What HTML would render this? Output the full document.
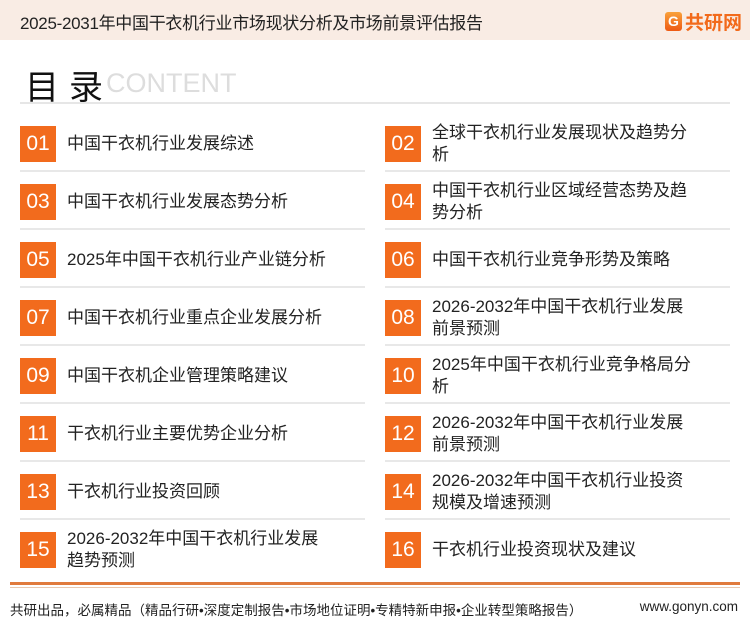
<!DOCTYPE html>
<html><head><meta charset="utf-8"><style>
body{margin:0;width:750px;height:622px;background:#fff;font-family:"Liberation Sans","Noto Sans CJK SC",sans-serif;position:relative;overflow:hidden;color:#222}
.hd{position:absolute;left:0;top:0;width:750px;height:40px;background:#f9ece4}
.hd .t{position:absolute;left:20px;top:9px;font-size:17px;color:#222;letter-spacing:-0.3px}
.logo{position:absolute;right:8px;top:8px;font-size:19px;font-weight:bold;color:#f26a1b;display:flex;align-items:center;gap:3px}
.logo i{display:inline-block;width:17px;height:19px;background:linear-gradient(#f9a13a,#ee5a14);border-radius:3px;color:#fff;font-style:normal;font-size:14px;text-align:center;line-height:19px}
.mt{position:absolute;left:25px;top:60px;font-size:34px;color:#111;letter-spacing:10px}
.ct{position:absolute;left:106px;top:68px;font-size:27px;color:#ddd}
.hl{position:absolute;left:20px;top:102px;width:710px;height:2px;background:#e6e6e6}
.it{position:absolute;width:345px;height:58px}
.it .n{position:absolute;left:0;top:8px;width:36px;height:36px;background:#f26b1d;color:#fff;font-size:21px;text-align:center;line-height:36px;font-weight:300}
.it .x{position:absolute;left:47px;top:0;height:52px;width:266px;display:flex;align-items:center;font-size:17px;line-height:22px;color:#222}
.it .l{position:absolute;left:0;top:52px;width:345px;height:2px;background:#e8e8e8}
.fl{position:absolute;left:10px;top:582px;width:730px;height:3px;background:#e07a3c}
.fl2{position:absolute;left:10px;top:587px;width:730px;height:1px;background:#e8c8b0}
.ft{position:absolute;left:10px;top:599px;font-size:13.5px;color:#222}
.fr{position:absolute;right:12px;top:599px;font-size:13.5px;color:#222}
</style></head><body>
<div class="hd"><div class="t">2025-2031年中国干衣机行业市场现状分析及市场前景评估报告</div><div class="logo"><i>G</i>共研网</div></div>
<div class="mt">目录</div><div class="ct">CONTENT</div>
<div class="hl"></div>

<div class="it" style="left:20px;top:118px"><div class="n">01</div><div class="x">中国干衣机行业发展综述</div><div class="l"></div></div>
<div class="it" style="left:385px;top:118px"><div class="n">02</div><div class="x">全球干衣机行业发展现状及趋势分析</div><div class="l"></div></div>
<div class="it" style="left:20px;top:176px"><div class="n">03</div><div class="x">中国干衣机行业发展态势分析</div><div class="l"></div></div>
<div class="it" style="left:385px;top:176px"><div class="n">04</div><div class="x">中国干衣机行业区域经营态势及趋势分析</div><div class="l"></div></div>
<div class="it" style="left:20px;top:234px"><div class="n">05</div><div class="x">2025年中国干衣机行业产业链分析</div><div class="l"></div></div>
<div class="it" style="left:385px;top:234px"><div class="n">06</div><div class="x">中国干衣机行业竞争形势及策略</div><div class="l"></div></div>
<div class="it" style="left:20px;top:292px"><div class="n">07</div><div class="x">中国干衣机行业重点企业发展分析</div><div class="l"></div></div>
<div class="it" style="left:385px;top:292px"><div class="n">08</div><div class="x">2026-2032年中国干衣机行业发展前景预测</div><div class="l"></div></div>
<div class="it" style="left:20px;top:350px"><div class="n">09</div><div class="x">中国干衣机企业管理策略建议</div><div class="l"></div></div>
<div class="it" style="left:385px;top:350px"><div class="n">10</div><div class="x">2025年中国干衣机行业竞争格局分析</div><div class="l"></div></div>
<div class="it" style="left:20px;top:408px"><div class="n">11</div><div class="x">干衣机行业主要优势企业分析</div><div class="l"></div></div>
<div class="it" style="left:385px;top:408px"><div class="n">12</div><div class="x">2026-2032年中国干衣机行业发展前景预测</div><div class="l"></div></div>
<div class="it" style="left:20px;top:466px"><div class="n">13</div><div class="x">干衣机行业投资回顾</div><div class="l"></div></div>
<div class="it" style="left:385px;top:466px"><div class="n">14</div><div class="x">2026-2032年中国干衣机行业投资规模及增速预测</div><div class="l"></div></div>
<div class="it" style="left:20px;top:524px"><div class="n">15</div><div class="x">2026-2032年中国干衣机行业发展趋势预测</div></div>
<div class="it" style="left:385px;top:524px"><div class="n">16</div><div class="x">干衣机行业投资现状及建议</div></div>

<div class="fl"></div><div class="fl2"></div>
<div class="ft">共研出品，必属精品（精品行研•深度定制报告•市场地位证明•专精特新申报•企业转型策略报告）</div>
<div class="fr">www.gonyn.com</div>
</body></html>
